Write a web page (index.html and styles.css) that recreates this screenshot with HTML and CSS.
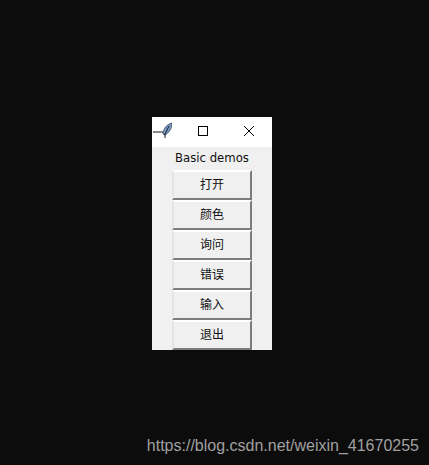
FILE: index.html
```html
<!DOCTYPE html>
<html lang="en">
<head>
    <meta charset="UTF-8">
    <title>Basic demos</title>
    <link rel="stylesheet" href="styles.css">
</head>
<body>
    <div class="window">
        <div class="titlebar">
            <svg class="feather" width="20" height="20" viewBox="0 0 20 20">
                <path d="M1 11H11" stroke="#111" stroke-width="1" fill="none"/>
                <path d="M11 13C11 8 15 3 20 2C20 7 17 12 13 14Z" fill="#7d9dc0" stroke="#2c3f5c" stroke-width="0.8"/>
                <path d="M17 5L13 13V17" stroke="#101a2c" stroke-width="1" fill="none"/>
            </svg>
            <div class="title-btn">
                <svg width="12" height="12" viewBox="0 0 12 12"><rect x="1.5" y="1.5" width="9" height="9" fill="none" stroke="#000"/></svg>
            </div>
            <div class="title-btn">
                <svg width="12" height="12" viewBox="0 0 12 12"><path d="M1 1L11 11M11 1L1 11" stroke="#000" fill="none"/></svg>
            </div>
        </div>
        <div class="body">
            <div class="label">Basic demos</div>
            <button class="demo-button">打开</button>
            <button class="demo-button">颜色</button>
            <button class="demo-button">询问</button>
            <button class="demo-button">错误</button>
            <button class="demo-button">输入</button>
            <button class="demo-button">退出</button>
        </div>
    </div>
    <div class="watermark">https://blog.csdn.net/weixin_41670255</div>
</body>
</html>
```

FILE: styles.css
```css
body {
    margin: 0;
    width: 429px;
    height: 465px;
    overflow: hidden;
    position: relative;
    background-color: #0c0c0c;
    font-family: "Liberation Sans", "Noto Sans CJK SC", sans-serif;
}

.window {
    position: absolute;
    left: 152px;
    top: 117px;
    width: 120px;
    height: 233px;
    background-color: #f0f0f0;
    overflow: hidden;
}

.titlebar {
    box-sizing: border-box;
    height: 30px;
    padding-bottom: 2px;
    background-color: #fff;
    display: flex;
    align-items: center;
}

.feather {
    flex: none;
    width: 20px;
    margin-right: 8px;
}

.title-btn {
    width: 46px;
    height: 28px;
    display: flex;
    align-items: center;
    justify-content: center;
}

.body {
    display: flex;
    flex-direction: column;
    align-items: center;
}

.label {
    height: 23px;
    line-height: 23px;
    font-family: "DejaVu Sans", sans-serif;
    font-size: 11.7px;
    color: #111;
}

.demo-button {
    box-sizing: border-box;
    width: 80px;
    height: 30px;
    padding: 0 0 3px;
    background-color: #f0f0f0;
    border: 2px solid;
    border-color: #fff #7c7c7c #7c7c7c #e4e4e4;
    font-family: "Noto Sans CJK SC", sans-serif;
    font-size: 12px;
    color: #111;
}

.watermark {
    position: absolute;
    right: 10px;
    top: 436px;
    font-size: 16px;
    line-height: 20px;
    color: #a0a0a0;
    white-space: nowrap;
}
```
